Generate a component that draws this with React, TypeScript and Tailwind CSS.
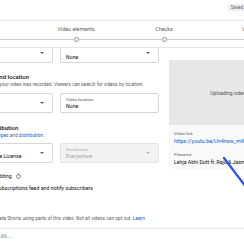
import React from 'react'

const steps = ['Details', 'Video elements', 'Checks', 'Visibility']

function Arrow({ muted = false }: { muted?: boolean }) {
  return (
    <span
      className={
        muted
          ? 'w-0 h-0 border-l-[2px] border-r-[2px] border-t-[2px] border-l-transparent border-r-transparent border-t-[#b5b5b5]'
          : 'w-0 h-0 border-l-[2px] border-r-[2px] border-t-[2px] border-l-transparent border-r-transparent border-t-[#606060]'
      }
    />
  )
}

interface FieldProps {
  label?: string
  value: string
  select?: boolean
  disabled?: boolean
}

function Field({ label, value, select = false, disabled = false }: FieldProps) {
  return (
    <div
      className={
        disabled
          ? 'w-[99px] h-[20px] shrink-0 flex items-center rounded-[2px] border border-[#e3e3e3] bg-[#f2f2f2] pl-[5px] pr-[8px]'
          : 'w-[99px] h-[20px] shrink-0 flex items-center rounded-[2px] border border-[#d6d6d6] bg-white pl-[5px] pr-[8px]'
      }
    >
      <div className={label ? 'flex-1 flex flex-col self-start pt-[3px]' : 'flex-1 flex flex-col self-start pt-[9px]'}>
        {label && (
          <span className={disabled ? 'text-[4.3px] leading-[5px] text-[#b0b0b0]' : 'text-[4.3px] leading-[5px] text-[#606060]'}>
            {label}
          </span>
        )}
        <span
          className={
            disabled
              ? 'text-[5.2px] leading-[6px] mt-[1px] text-[#a8a8a8] whitespace-nowrap'
              : 'text-[5.2px] leading-[6px] mt-[1px] text-[#0f0f0f] whitespace-nowrap'
          }
        >
          {value}
        </span>
      </div>
      {select && <Arrow muted={disabled} />}
    </div>
  )
}

export default function App() {
  return (
    <div className="relative w-[244px] h-[244px] overflow-hidden bg-white flex flex-col font-['Roboto',sans-serif] text-[#0f0f0f]">
      {/* title bar */}
      <div className="h-[21px] shrink-0 border-b border-[#e6e6e6] flex justify-end items-start pt-[4px]">
        <span className="h-[7px] px-[3px] -mr-[2px] bg-[#eeeeee] rounded-[1px] text-[4.5px] leading-[7px] text-[#606060]">
          Saved
        </span>
      </div>

      {/* stepper */}
      <div className="h-[27px] shrink-0 border-b border-[#e6e6e6] flex -ml-[76px]">
        {steps.map((s, i) => (
          <div key={s} className={i === 0 ? 'w-[108px] shrink-0 flex flex-col items-start' : 'w-[88px] shrink-0 flex flex-col items-center'}>
            <span className="mt-[5px] text-[5.4px] leading-[6px] text-[#606060] whitespace-nowrap">{s}</span>
            <div className="mt-[5px] w-full h-[5px] flex items-center">
              {i > 0 && <div className="flex-1 h-px bg-[#cfcfcf]" />}
              <div className="w-[5px] h-[5px] rounded-full border border-[#909090] bg-white" />
              <div className="flex-1 h-px bg-[#cfcfcf]" />
            </div>
          </div>
        ))}
      </div>

      {/* scrolled content */}
      <div className="flex-1 overflow-hidden">
        <div className="-mt-[5px] flex">
          <div className="w-[205px] shrink-0 -ml-[46px] flex flex-col">
            <div className="flex gap-[7px]">
              <Field value="English" select />
              <Field value="None" select />
            </div>

            <h3 className="mt-[10px] text-[6px] leading-[8px] font-medium whitespace-nowrap">Recording date and location</h3>
            <p className="mt-[1px] text-[4.8px] leading-[6px] text-[#606060] whitespace-nowrap">
              Add when and where your video was recorded. Viewers can search for videos by location.
            </p>
            <div className="mt-[5px] flex gap-[7px]">
              <Field label="Recording date" value="None" select />
              <Field label="Video location" value="None" />
            </div>

            <h3 className="mt-[11px] text-[6px] leading-[8px] font-medium whitespace-nowrap">License and distribution</h3>
            <p className="mt-[1px] text-[4.8px] leading-[6px] text-[#606060] whitespace-nowrap">
              Learn about <span className="text-[#065fd4]">license types</span> and{' '}
              <span className="text-[#065fd4]">distribution</span>.
            </p>
            <div className="mt-[4px] flex gap-[7px]">
              <Field label="License" value="Standard YouTube License" select />
              <Field label="Distribution" value="Everywhere" select disabled />
            </div>

            <div className="mt-[10px] flex items-center gap-[10px] h-[6px]">
              <span className="w-[7px] h-[7px] shrink-0 border border-[#606060] rounded-[1px]" />
              <span className="text-[5.3px] leading-[6px] whitespace-nowrap">Allow embedding</span>
              <span className="-ml-[6px] w-[5px] h-[5px] rounded-full border border-[#8a8a8a] flex items-center justify-center text-[3.5px] leading-none text-[#606060]">
                ?
              </span>
            </div>
            <div className="mt-[6px] flex items-center gap-[10px] h-[6px]">
              <span className="w-[7px] h-[7px] shrink-0 border border-[#606060] rounded-[1px]" />
              <span className="text-[5.3px] leading-[6px] whitespace-nowrap">
                Publish to subscriptions feed and notify subscribers
              </span>
            </div>

            <p className="mt-[25px] pl-[16px] w-[202px] text-[4.8px] leading-[6px] text-[#606060]">
              Let others create Shorts using parts of this video. Not all videos can opt out.{' '}
              <span className="text-[#065fd4]">Learn more</span>
            </p>
          </div>

          <div className="ml-[10px] mt-[17px] w-[122px] shrink-0 flex flex-col">
            <div className="h-[65px] bg-[#e7e7e7] flex items-center justify-center">
              <span className="text-[5px] leading-[6px] text-[#505050]">Uploading video...</span>
            </div>
            <div className="h-[44px] bg-[#f9f9f9] px-[5px] pt-[6px] flex flex-col">
              <span className="text-[4.3px] leading-[5px] text-[#606060]">Video link</span>
              <span className="mt-[2px] text-[5.4px] leading-[6px] text-[#065fd4] whitespace-nowrap overflow-hidden">
                https://youtu.be/Un4nsw_mXq0
              </span>
              <span className="mt-[8px] text-[4.3px] leading-[5px] text-[#606060]">Filename</span>
              <span className="mt-[2px] text-[5.2px] leading-[6px] whitespace-nowrap overflow-hidden">
                Lehja Abhi Dutt ft. Raju &amp; Jasmine.mp4
              </span>
            </div>
          </div>
        </div>
      </div>

      {/* footer */}
      <div className="h-[16px] shrink-0 border-t border-[#e6e6e6] flex items-center -ml-[20px]">
        <span className="text-[4.5px] leading-[6px] text-[#606060] whitespace-nowrap">Uploading 6% ...</span>
      </div>

      {/* annotation arrow */}
      <svg className="absolute left-0 top-0 pointer-events-none" width="244" height="244" viewBox="0 0 244 244">
        <line x1="224" y1="158" x2="252" y2="195" stroke="#2f4ff2" strokeWidth="2.2" strokeLinecap="round" />
      </svg>
    </div>
  )
}
